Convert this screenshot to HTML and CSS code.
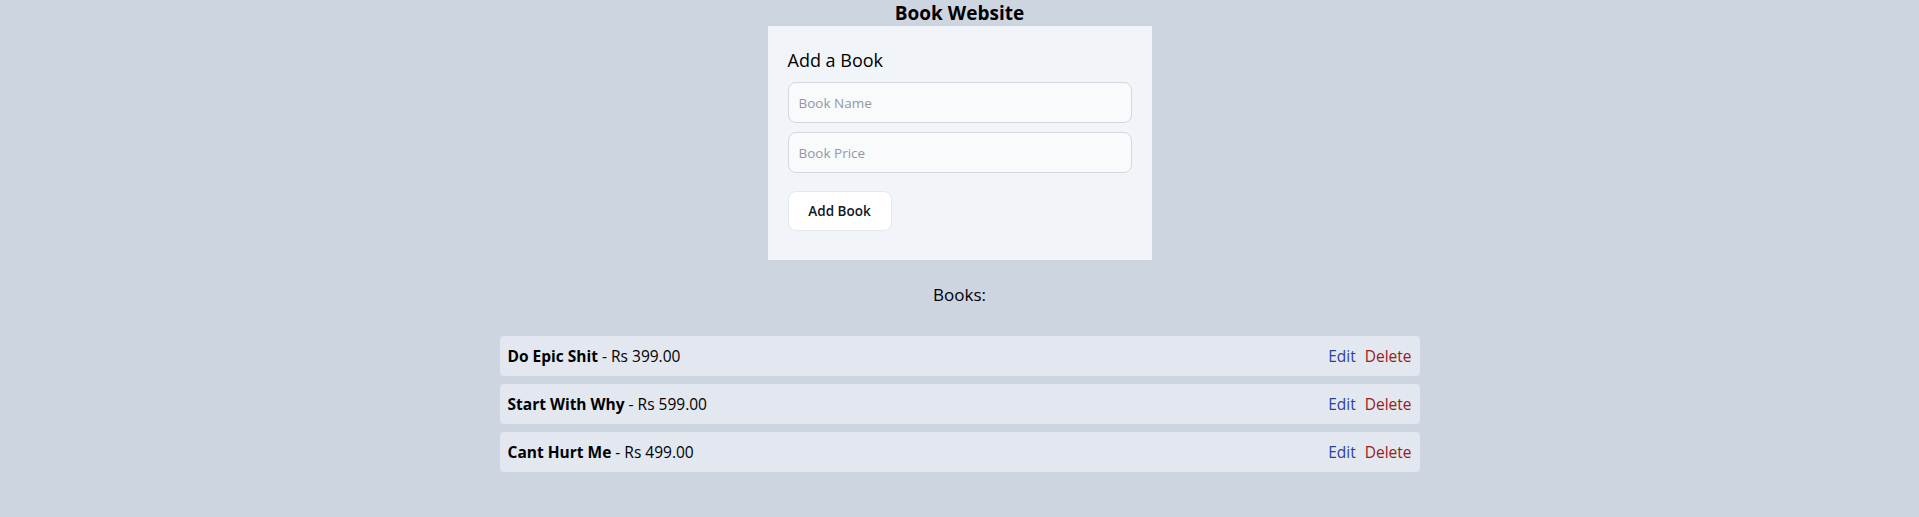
FILE: index.html
```html
<!DOCTYPE html>
<html lang="en">
<head>
<meta charset="utf-8">
<title>Book Website</title>
<link rel="stylesheet" href="styles.css">
</head>
<body>
  <h1 class="site-title">Book Website</h1>
  <div class="form-box">
    <h2 class="form-title">Add a Book</h2>
    <input class="field" type="text" placeholder="Book Name">
    <input class="field" type="text" placeholder="Book Price">
    <button class="add-btn" type="button">Add Book</button>
  </div>
  <h3 class="list-title">Books:</h3>
  <ul class="book-list">
    <li class="book-row">
      <span class="book-info"><strong>Do Epic Shit</strong> - Rs 399.00</span>
      <span class="actions"><a class="edit">Edit</a><a class="delete">Delete</a></span>
    </li>
    <li class="book-row">
      <span class="book-info"><strong>Start With Why</strong> - Rs 599.00</span>
      <span class="actions"><a class="edit">Edit</a><a class="delete">Delete</a></span>
    </li>
    <li class="book-row">
      <span class="book-info"><strong>Cant Hurt Me</strong> - Rs 499.00</span>
      <span class="actions"><a class="edit">Edit</a><a class="delete">Delete</a></span>
    </li>
  </ul>
</body>
</html>
```
FILE: styles.css
```css
* { box-sizing: border-box; }
body {
  margin: 0;
  background: #cdd5e1;
  font-family: "Open Sans", "Noto Sans", sans-serif;
  color: #000;
}
.site-title {
  margin: 0;
  height: 26px;
  font-size: 19px;
  line-height: 26px;
  font-weight: 700;
  text-align: center;
}
.form-box {
  width: 384px;
  margin: 0 auto;
  padding: 20px 20px 29px;
  background: #f1f5f9;
  display: flex;
  flex-direction: column;
  align-items: flex-start;
}
.form-title {
  margin: 0 0 8px;
  font-size: 18px;
  line-height: 28px;
  font-weight: 400;
}
.field {
  width: 344px;
  height: 41px;
  margin-bottom: 9px;
  padding: 0 10px;
  border: 1px solid #d4d8de;
  border-radius: 8px;
  background: #f8fafc;
  font-family: inherit;
  font-size: 13.5px;
  color: #111;
}
.field::placeholder { color: #9299a3; }
.add-btn {
  margin-top: 9px;
  width: 104px;
  height: 40px;
  border: 1px solid #e5e7eb;
  border-radius: 8px;
  background: #fff;
  font-family: inherit;
  font-size: 13.5px;
  font-weight: 600;
  color: #111827;
}
.list-title {
  margin: 22px 0 0;
  font-size: 17px;
  line-height: 26px;
  font-weight: 500;
  text-align: center;
}
.book-list {
  list-style: none;
  width: 920px;
  margin: 28px auto 0;
  padding: 0;
  display: flex;
  flex-direction: column;
  gap: 8px;
}
.book-row {
  height: 40px;
  padding: 0 8px;
  border-radius: 4px;
  background: #e2e7f0;
  display: flex;
  align-items: center;
  justify-content: space-between;
  font-size: 15.5px;
}
.book-info strong { font-weight: 700; }
.actions { display: flex; gap: 9px; }
.edit { color: #2f3f9c; }
.delete { color: #991b1b; }
```
